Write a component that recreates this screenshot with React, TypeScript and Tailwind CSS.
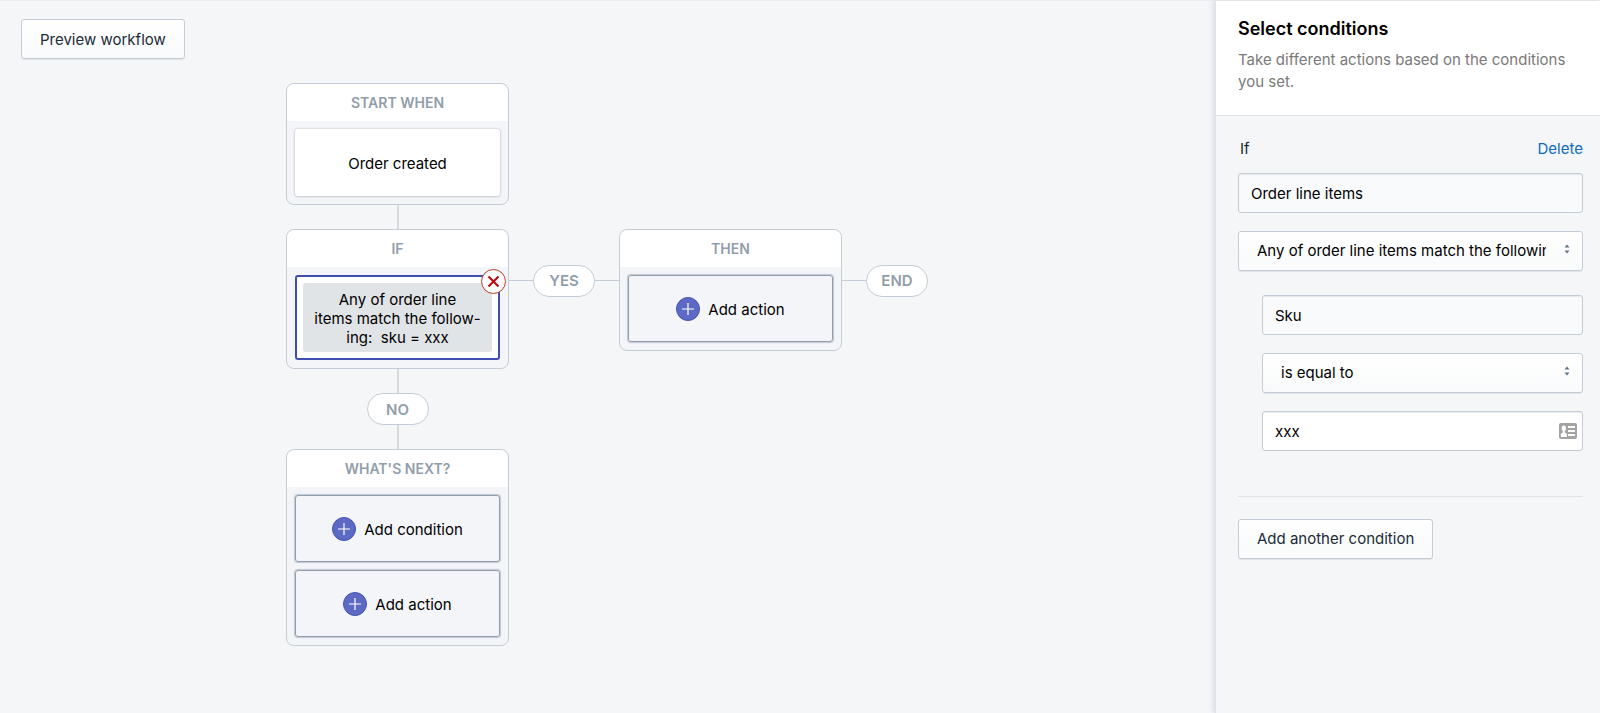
import React from "react";

const inputClass =
  "block h-10 w-full rounded-[3px] border border-[#c4cdd5] px-3 pt-0.5 text-[15px] text-black shadow-[inset_0_1px_1px_rgba(99,115,129,0.12)]";

const Card: React.FC<{ title: string; children: React.ReactNode }> = ({
  title,
  children,
}) => (
  <section className="w-[223px] shrink-0 rounded-lg border border-[#c4cdd5] bg-[#f3f5f9]">
    <h2 className="rounded-t-lg bg-white py-2 text-center text-sm leading-[21px] font-semibold text-[#919eab]">
      {title}
    </h2>
    <div className="flex flex-col gap-2 p-2">{children}</div>
  </section>
);

const AddButton: React.FC<{ label: string }> = ({ label }) => (
  <button className="flex h-[67px] items-center justify-center gap-2 rounded-[3px] border border-[#919eab] text-[15px] text-black shadow-[0_0_1px_1px_rgba(145,158,171,0.5)]">
    <svg className="size-6" viewBox="0 0 24 24" fill="none">
      <circle cx="12" cy="12" r="11.5" fill="#5c6ac4" stroke="#4453b5" />
      <path d="M12 6v12M6 12h12" stroke="#fff" strokeWidth="1.2" />
    </svg>
    <span className="pt-1">{label}</span>
  </button>
);

const Pill: React.FC<{ label: string }> = ({ label }) => (
  <span className="flex h-8 w-[62px] shrink-0 items-center justify-center rounded-full border border-[#c4cdd5] bg-white pt-0.5 text-[15px] font-semibold text-[#919eab]">
    {label}
  </span>
);

const VLine = () => <div className="h-6 w-0.5 bg-[#d5dbe1]" />;
const HLine = () => <div className="h-px w-6 shrink-0 bg-[#c4cdd5]" />;

const SelectField: React.FC<{ label: string; option: string }> = ({
  label,
  option,
}) => (
  <div className="relative">
    <select
      aria-label={label}
      className="block h-10 w-full appearance-none rounded-[3px] border border-[#c4cdd5] bg-linear-to-b from-white to-[#f9fafb] pt-0.5 pr-9 pl-[18px] text-[15px] text-black shadow-[0_1px_0_rgba(22,29,37,0.08)]"
    >
      <option>{option}</option>
    </select>
    <svg
      className="pointer-events-none absolute top-[13px] right-[13px] h-2.5 w-1.5"
      viewBox="0 0 6 10"
      fill="#637381"
    >
      <path d="M3 0.5L5.5 3.5H0.5zM3 9.5L0.5 6.5H5.5z" />
    </svg>
  </div>
);

const secondaryButton =
  "h-10 rounded-[3px] border border-[#c4cdd5] bg-linear-to-b from-white to-[#f9fafb] px-[18px] pt-0.5 text-[15px] text-[#212b36] shadow-[0_1px_0_rgba(22,29,37,0.08)]";

const Canvas = () => (
  <main className="min-w-0 flex-1 overflow-hidden px-[21px] pt-[18px]">
    <button className={secondaryButton}>Preview workflow</button>

    <div className="mt-6 ml-[265px]">
      <div className="flex w-[223px] flex-col items-center">
        <Card title="START WHEN">
          <button className="h-[67px] rounded-[3px] bg-white pt-1 text-[15px] text-black shadow-[0_0_1px_1px_rgba(63,63,68,0.1),0_1px_3px_rgba(63,63,68,0.15)]">
            Order created
          </button>
        </Card>
        <VLine />
      </div>

      <div className="flex items-start">
        <Card title="IF">
          <div className="relative rounded-[3px] border-2 border-[#3f4eae] bg-white p-1.5">
            <p className="rounded-[3px] bg-[#e0e4e7] pt-[7px] pb-[5px] text-center text-[15px] leading-[19px] text-black">
              Any of order line
              <br />
              items match the follow-
              <br />
              ing:&nbsp; sku = xxx
            </p>
            <button
              aria-label="Remove condition"
              className="absolute -top-2 -right-2 size-[25px]"
            >
              <svg viewBox="0 0 25 25" fill="none">
                <circle cx="12.5" cy="12.5" r="12" fill="#fff" stroke="#bf3b2b" />
                <path d="M7.5 7.5l10 10M17.5 7.5l-10 10" stroke="#bf0711" strokeWidth="2" />
              </svg>
            </button>
          </div>
        </Card>
        <div className="flex h-[103px] items-center">
          <HLine />
          <Pill label="YES" />
          <HLine />
        </div>
        <Card title="THEN">
          <AddButton label="Add action" />
        </Card>
        <div className="flex h-[103px] items-center">
          <HLine />
          <Pill label="END" />
        </div>
      </div>

      <div className="flex w-[223px] flex-col items-center">
        <VLine />
        <Pill label="NO" />
        <VLine />
        <Card title="WHAT'S NEXT?">
          <AddButton label="Add condition" />
          <AddButton label="Add action" />
        </Card>
      </div>
    </div>
  </main>
);

const ConditionsPanel = () => (
  <aside className="w-[385px] shrink-0 border-l border-[#dfe3e8] shadow-[-2px_0_5px_rgba(99,115,129,0.18)]">
    <header className="border-b border-[#dfe3e8] bg-white pt-4 pr-4 pb-[22px] pl-[22px]">
      <h1 className="text-lg leading-6 font-semibold text-black">
        Select conditions
      </h1>
      <p className="mt-2 text-[15px] leading-[22px] text-[#7a7a7a]">
        Take different actions based on the conditions you set.
      </p>
    </header>
    <form className="pt-[22px] pr-[17px] pl-[22px] text-[15px]">
      <div className="flex items-center justify-between">
        <label htmlFor="subject" className="pl-0.5 text-[#212b36]">
          If
        </label>
        <button type="button" className="text-[#0f6cbd]">
          Delete
        </button>
      </div>
      <input
        id="subject"
        className={inputClass + " mt-3 mb-[18px] bg-[#f9fafb]"}
        defaultValue="Order line items"
        readOnly
      />
      <SelectField
        label="Match type"
        option="Any of order line items match the following"
      />
      <div className="mt-6 flex flex-col gap-[18px] pl-6">
        <input
          aria-label="Property"
          className={inputClass + " bg-[#f9fafb]"}
          defaultValue="Sku"
          readOnly
        />
        <SelectField label="Comparison" option="is equal to" />
        <div className="relative">
          <input
            aria-label="Value"
            className={inputClass + " bg-white"}
            defaultValue="xxx"
          />
          <svg
            className="absolute top-3 right-1.5 h-4 w-[18px]"
            viewBox="0 0 18 16"
          >
            <rect width="18" height="16" rx="2" fill="#a3a3a3" />
            <ellipse cx="4.8" cy="5.2" rx="2.2" ry="2.8" fill="#fff" />
            <path
              d="M3.8 7h2v2.5l2 1.3V14h-6v-3.2l2-1.3zM9 3h7v2H9zM9 7h7v2H9zM9 11h7v2H9z"
              fill="#fff"
            />
          </svg>
        </div>
      </div>
      <hr className="mt-[45px] mb-[22px] border-[#dfe3e8]" />
      <button type="button" className={secondaryButton}>
        Add another condition
      </button>
    </form>
  </aside>
);

export default function App() {
  return (
    <div className="flex min-h-screen border-t border-[#ebeef0] bg-[#f4f6f8] font-['Inter',sans-serif]">
      <Canvas />
      <ConditionsPanel />
    </div>
  );
}
